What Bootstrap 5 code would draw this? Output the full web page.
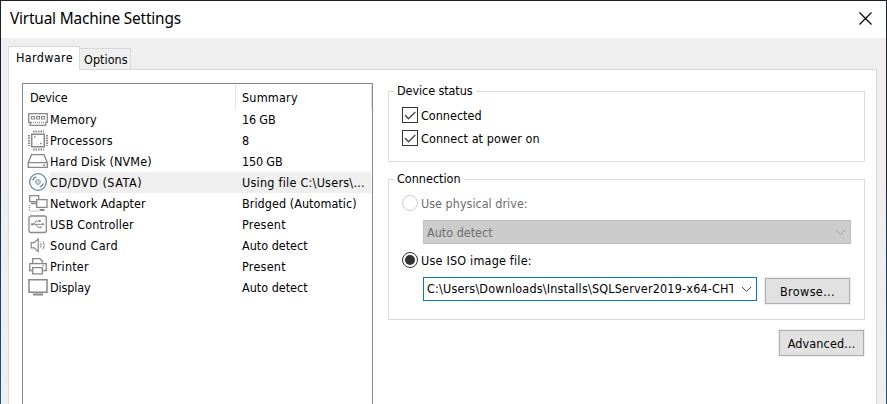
<!DOCTYPE html>
<html lang="en">
<head>
<meta charset="utf-8">
<title>Virtual Machine Settings</title>
<link href="https://cdn.jsdelivr.net/npm/bootstrap@5.3.0/dist/css/bootstrap.min.css" rel="stylesheet">
<style>
body{font-family:"DejaVu Sans Condensed","DejaVu Sans",sans-serif;font-stretch:condensed;font-size:12.5px;line-height:21px;color:#000;height:404px;overflow:hidden}
.win{height:404px;border:1px solid #1a2435;border-bottom:0;border-image:linear-gradient(#1a1f30 45%,#123f66 65%,#1a5577) 1;background:#efefef;white-space:nowrap}
.titlebar{height:37px;padding:0 14px 2px 9px;background:#fff}
.titlebar h1{font:15.4px/34px "Noto Sans","Open Sans",sans-serif;font-stretch:normal;margin:0}
.tabs{height:31px;padding:8px 0 0 7px}
.tab-on{width:72px;height:24px;border:1px solid #d9d9d9;border-bottom:0;background:#fff;position:relative;z-index:1;padding-left:7px;line-height:22px}
.tab-off{width:51px;height:21px;margin-top:2px;border:1px solid #d9d9d9;border-width:1px 1px 0 0;padding-left:4px;line-height:22px}
.pane{margin:0 9px 0 7px;height:335px;border:1px solid #d9d9d9;border-bottom:0;background:#fff;padding:13px 11px 0 13px}
.devices{width:351px;height:321px;border:1px solid #828790;border-bottom:0;padding-top:1px}
.head-row{height:24px;line-height:26px}
.c1{width:213px;padding-left:7px}
.head-row .c1{border-right:1px solid #e3e3e3}
.c2{width:136px;padding-left:6px}
.head-row .c2{border-right:1px solid #e3e3e3}
.dev{height:21px;line-height:22px}
.dev svg{width:27px;height:21px;flex:none}
.dev .nm{width:186px;height:21px}
.dev .c2{padding-left:6px;width:135px;height:21px}
.dev.sel .nm,.dev.sel .c2{background:#efefef}
svg{fill:none;stroke:#888;stroke-width:1.5;display:block}
.side{width:477px;margin-left:15px}
.group{border:1px solid #dcdcdc;padding:5px 0 0 13px}
.group legend{float:none;width:auto;font-size:12.5px;line-height:20px;margin:0 0 0 -8px;padding:0 3px 1px}
.status{height:81px;margin-top:-2px}
.conn{height:151px;margin-top:7px}
.opt{height:23px;gap:2px;line-height:17px}
.opt svg{width:17px;height:17px}
.combo{height:24px;flex:none;margin:2px 0 8px 21px;border:1px solid #bfbfbf;background:#ccc;color:#6d6d6d;width:428px;padding:0 4px 0 3px}
.combo svg{width:11px;height:7px;stroke:#a0a0a0;stroke-width:1}
.iso{width:334px;background:#fff;border-color:#0078d7;color:#000;line-height:20px}
.iso svg{stroke:#444}
.path-text{width:306px;overflow:hidden}
.btn-win{height:26px;width:85px;background:#e1e1e1;border:1px solid #adadad;border-radius:0;font-size:12.5px;padding:0;line-height:25px;color:#000;box-shadow:0 0 0 1px #f0f0f0}
.browse{margin:3px 0 0 8px}
.advanced{margin:10px 1px 0 auto}
</style>
</head>
<body>
<main class="win">
<header class="titlebar d-flex justify-content-between align-items-center">
<h1><span data-w="170.5">Virtual Machine Settings</span></h1>
<svg width="13" height="13" viewBox="0 0 13 13" style="stroke:#000;stroke-width:1.2"><path d="M.5.5l12 12M12.5.5l-12 12"/></svg>
</header>
<nav class="tabs d-flex align-items-start"><div class="tab-on"><span data-w="56">Hardware</span></div><div class="tab-off"><span data-w="43">Options</span></div></nav>
<section class="pane d-flex align-items-start">
<div class="devices">
<div class="head-row d-flex"><div class="c1"><span data-w="37">Device</span></div><div class="c2"><span data-w="55">Summary</span></div></div>
<div class="dev d-flex"><svg viewBox="0 0 27 21"><path d="M5.7 4.7h18.6v8.6h-1.5v3H7.2v-3H5.7z" stroke-width="1.3"/><path d="M8.5 7.5h3v2.5h-3zM13.5 7.5h3v2.5h-3zM18.5 7.5h3v2.5h-3z" stroke-width="1.1"/><path d="M8 13.5h14" stroke-dasharray="1 1"/></svg><div class="nm"><span data-w="46">Memory</span></div><div class="c2"><span data-w="33">16 GB</span></div></div>
<div class="dev d-flex"><svg viewBox="0 0 27 21"><path d="M8.7 4.2h12.6v12.6H8.7z"/><path d="M10 1.5h11M10 19.5h11" stroke-width="2" stroke-dasharray="1.5 1"/><path d="M6 5v11M24 5v11" stroke-width="2" stroke-dasharray="1.5 1"/><path d="M11 7h1.5M17 13.5h1.5"/></svg><div class="nm"><span data-w="62">Processors</span></div><div class="c2"><span data-w="7">8</span></div></div>
<div class="dev d-flex"><svg viewBox="0 0 27 21"><path d="M8.5 3.7h12.5l3.3 8v4.6H5.2v-4.6zM5.2 11.7h19.1" stroke-width="1.3"/><path d="M20 14.3h2"/></svg><div class="nm"><span data-w="101">Hard Disk (NVMe)</span></div><div class="c2"><span data-w="40">150 GB</span></div></div>
<div class="dev sel d-flex"><svg viewBox="0 0 27 21" style="stroke:#66869e"><circle cx="15" cy="10" r="8.3" stroke-width="1.3"/><circle cx="15" cy="10" r="2.3" stroke-width="1"/><circle cx="15" cy="10" r=".4" stroke-width=".8"/><path d="M9.7 8.5a5.5 5.5 0 0 1 3.5-3.6M20.3 11.5a5.5 5.5 0 0 1-3.5 3.6" stroke-width="1.3"/></svg><div class="nm"><span data-w="91">CD/DVD (SATA)</span></div><div class="c2"><span data-w="122">Using file C:\Users\...</span></div></div>
<div class="dev d-flex"><svg viewBox="0 0 27 21"><path d="M13 10.5H8M14.5 8.7H6.7v-6h9V6M13.7 6.7H24v7.6H13.7z" stroke-width="1.3"/><path d="M16.5 17h5" stroke-width="2"/><path d="M6.5 12v6h9" stroke-width="1" stroke-dasharray="1 1"/></svg><div class="nm"><span data-w="95">Network Adapter</span></div><div class="c2"><span data-w="114">Bridged (Automatic)</span></div></div>
<div class="dev d-flex"><svg viewBox="0 0 27 21"><rect x="6" y="2" width="17.3" height="16.5" rx="2" stroke-width="1.3"/><path d="M9 10.3h11M11 10l2-3h4M13 10.5l2 3h3" stroke-width="1"/><path d="M19.5 8.5l2 1.8-2 1.7zM16 6h1.7v2H16zM17 12.5h1.5v1.7H17z" fill="#888" stroke="none"/><circle cx="9.3" cy="10.3" r="1.3" fill="#888" stroke="none"/></svg><div class="nm"><span data-w="83">USB Controller</span></div><div class="c2"><span data-w="43">Present</span></div></div>
<div class="dev d-flex"><svg viewBox="0 0 27 21"><path d="M8.2 7.7h3l4-3.8v12.8l-4-3.8h-3z" stroke-width="1.2"/><path d="M17.5 8q1.5 2.2 0 4.5M20 6.3q2.7 4 0 8" stroke-width="1"/></svg><div class="nm"><span data-w="67">Sound Card</span></div><div class="c2"><span data-w="65">Auto detect</span></div></div>
<div class="dev d-flex"><svg viewBox="0 0 27 21"><path d="M9.7 7V2.7h7.2l2.4 2.2V7M9.7 14.5h-3V7.7h16.6v6.8h-3M9.7 11.7h9.6v6.1H9.7zM19.5 9.7H21" stroke-width="1.3"/></svg><div class="nm"><span data-w="38">Printer</span></div><div class="c2"><span data-w="43">Present</span></div></div>
<div class="dev d-flex"><svg viewBox="0 0 27 21"><path d="M6 2.7h18v12.6H6z"/><path d="M10 17.5h10" stroke-width="2"/></svg><div class="nm"><span data-w="40">Display</span></div><div class="c2"><span data-w="65">Auto detect</span></div></div>
</div>
<div class="side">
<fieldset class="group status">
<legend><span data-w="75">Device status</span></legend>
<label class="opt d-flex align-items-start"><svg viewBox="0 0 17 17"><rect x=".5" y=".5" width="15" height="15" stroke="#333" stroke-width="1"/><path d="M3 8l3.5 3.7L13.3 5" stroke="#444" stroke-width="1.3"/></svg><span data-w="60">Connected</span></label>
<label class="opt d-flex align-items-start"><svg viewBox="0 0 17 17"><rect x=".5" y=".5" width="15" height="15" stroke="#333" stroke-width="1"/><path d="M3 8l3.5 3.7L13.3 5" stroke="#444" stroke-width="1.3"/></svg><span data-w="118">Connect at power on</span></label>
</fieldset>
<fieldset class="group conn">
<legend><span data-w="63">Connection</span></legend>
<label class="opt d-flex align-items-start" style="color:#6d6d6d"><svg viewBox="0 0 17 17"><circle cx="8" cy="8" r="7.5" stroke="#ccc" stroke-width="1"/></svg><span data-w="106">Use physical drive:</span></label>
<div class="combo d-flex justify-content-between align-items-center"><span data-w="65">Auto detect</span><svg viewBox="0 0 11 7"><path d="M1 1l4.5 4.5L10 1"/></svg></div>
<label class="opt d-flex align-items-start"><svg viewBox="0 0 17 17"><circle cx="8" cy="8" r="7.5" stroke="#333" stroke-width="1"/><circle cx="8" cy="8" r="5" fill="#333" stroke="none"/></svg><span data-w="110">Use ISO image file:</span></label>
<div class="d-flex align-items-start"><div class="combo iso d-flex justify-content-between align-items-center"><div class="path-text"><span data-w="308">C:\Users\Downloads\Installs\SQLServer2019-x64-CHT</span></div><svg viewBox="0 0 11 7"><path d="M1 1l4.5 4.5L10 1"/></svg></div><button class="btn btn-win browse"><span data-w="54">Browse...</span></button></div>
</fieldset>
<button class="btn btn-win advanced d-block"><span data-w="67">Advanced...</span></button>
</div>
</section>
</main>
<script src="https://cdn.jsdelivr.net/npm/bootstrap@5.3.0/dist/js/bootstrap.bundle.min.js"></script>
<script>
document.querySelectorAll('[data-w]').forEach(s=>{
  const w=s.getBoundingClientRect().width;
  s.style.letterSpacing=((+s.dataset.w+.6-w)/Math.max(1,s.textContent.length-1))+'px';
});
</script>
</body>
</html>
